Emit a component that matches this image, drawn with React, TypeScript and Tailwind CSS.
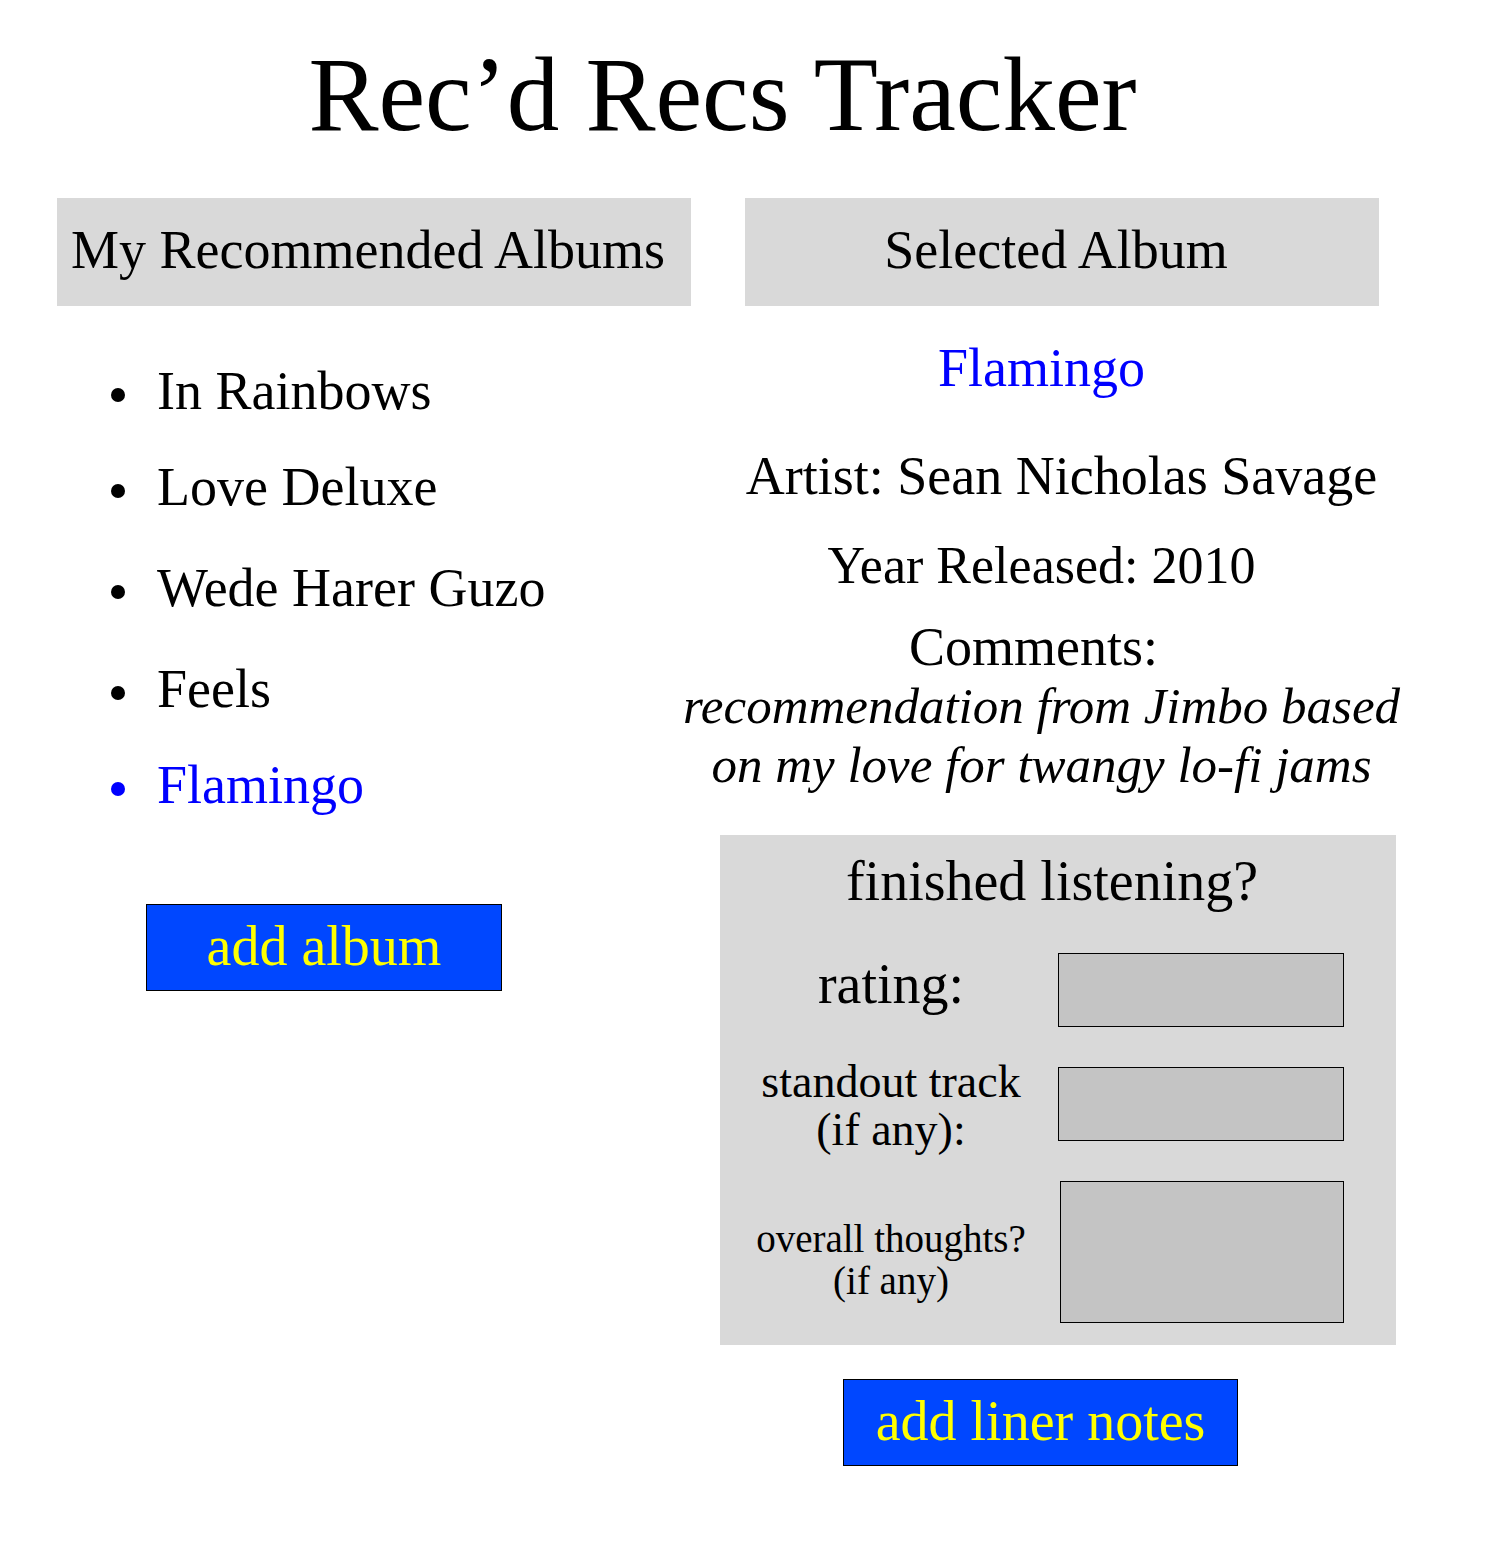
const albums = [
  { title: "In Rainbows", gap: "mb-9" },
  { title: "Love Deluxe", gap: "mb-[41px]" },
  { title: "Wede Harer Guzo", gap: "mb-[41px]" },
  { title: "Feels", gap: "mb-9" },
  { title: "Flamingo", gap: "mb-0" },
];

const field = "block border border-black bg-[#c4c4c4] px-3 text-3xl rounded-none";
const action =
  "border border-black bg-[#0047ff] text-center text-[56px] leading-[60px] text-[#ffff00] h-[87px] pb-1";

export default function App() {
  return (
    <div className="min-h-screen bg-white pt-9 pr-24 pb-20 pl-[57px] font-['Liberation_Serif',serif] text-[54px] leading-[60px] text-black">
      <h1 className="mr-2 text-center text-[105px] leading-[118px]">Rec’d Recs Tracker</h1>
      <main className="mt-11 grid grid-cols-[minmax(0,634fr)_minmax(0,705fr)]">
        <section>
          <h2 className="flex h-[108px] items-center justify-center bg-[#d9d9d9] pr-3 pb-1 whitespace-nowrap">
            My Recommended Albums
          </h2>
          <ul className="mt-[55px] ml-[54px]">
            {albums.map((a) => (
              <li key={a.title} className={a.gap}>
                <button
                  type="button"
                  className={
                    a.title === "Flamingo"
                      ? "flex items-center text-[#0000ff]"
                      : "flex items-center"
                  }
                >
                  <span className="mt-2 mr-8 size-3.5 rounded-full bg-current" />
                  {a.title}
                </button>
              </li>
            ))}
          </ul>
          <button type="button" className={`${action} mt-[89px] ml-[89px] w-[356px]`}>
            add album
          </button>
        </section>

        <section className="flex flex-col items-center text-center">
          <h2 className="mr-[17px] ml-[54px] flex h-[108px] items-center justify-center self-stretch bg-[#d9d9d9] pr-3 pb-1">
            Selected Album
          </h2>
          <h3 className="mt-8 mr-1 text-[#0000ff]">Flamingo</h3>
          <p className="mt-12 ml-9 whitespace-nowrap">Artist: Sean Nicholas Savage</p>
          <p className="mt-[30px] mr-1 text-[52px]">Year Released: 2010</p>
          <div className="mt-[22px] mr-1 leading-[59px] whitespace-nowrap">
            <p className="pr-4">Comments:</p>
            <p className="text-[51px] leading-[59px] italic">
              recommendation from Jimbo based
              <br />
              on my love for twangy lo-fi jams
            </p>
          </div>
          <form className="mt-10 ml-[29px] self-stretch bg-[#d9d9d9] pb-[22px]">
            <h3 className="pt-4 pr-3 text-[56px]">finished listening?</h3>
            <div className="grid grid-cols-[1fr_286px] items-center gap-y-[27px] pt-[42px] pr-[52px]">
              <label htmlFor="rating" className="pb-3 pl-1 text-[56px]">
                rating:
              </label>
              <input id="rating" className={`${field} h-[74px] w-[286px]`} />
              <label htmlFor="track" className="pt-1 pl-1 text-[46px] leading-[48px]">
                standout track
                <br />
                (if any):
              </label>
              <input id="track" className={`${field} h-[74px] w-[286px]`} />
              <label htmlFor="thoughts" className="pt-4 pl-1 text-[39px] leading-[42px]">
                overall thoughts?
                <br />
                (if any)
              </label>
              <textarea
                id="thoughts"
                className={`${field} h-[142px] w-[284px] resize-none justify-self-end`}
              />
            </div>
          </form>
          <button type="button" className={`${action} mt-[34px] mr-1.5 w-[395px]`}>
            add liner notes
          </button>
        </section>
      </main>
    </div>
  );
}
